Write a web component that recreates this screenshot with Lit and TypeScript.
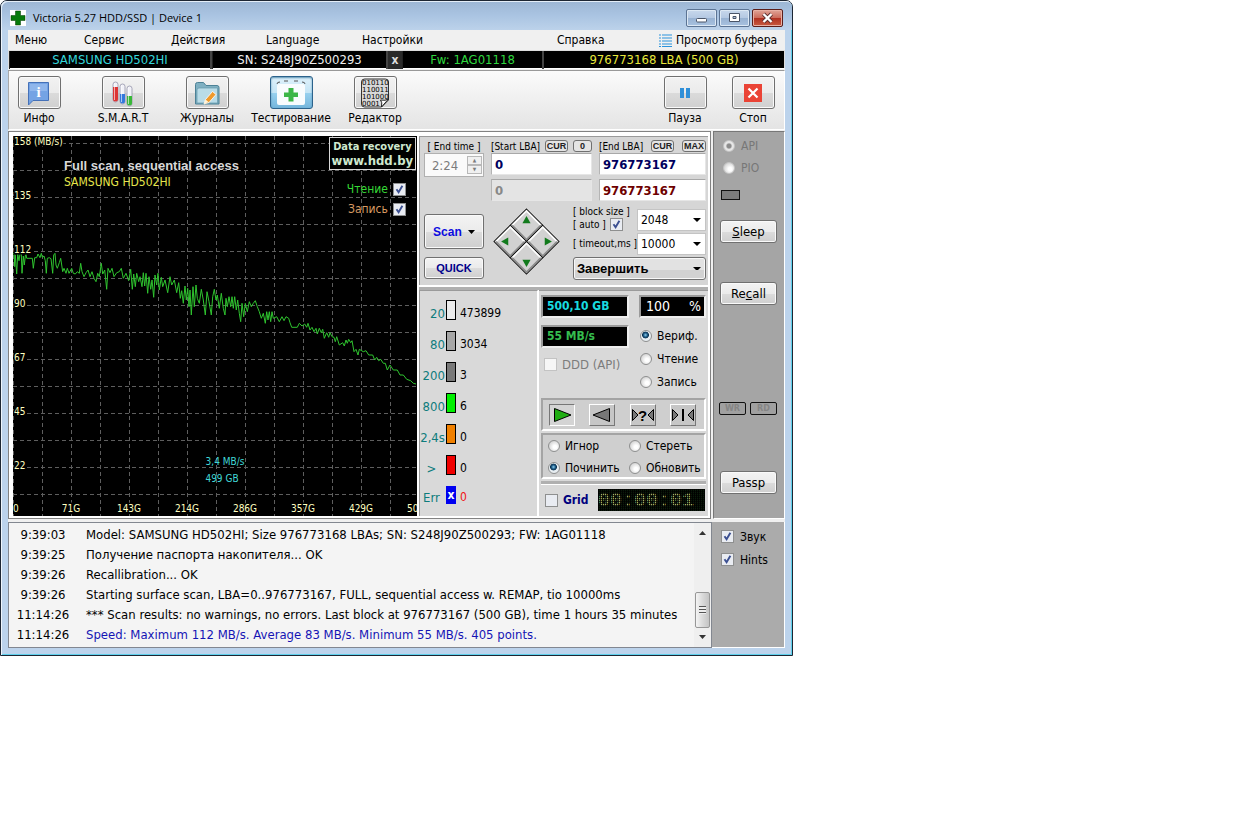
import { LitElement, html, css, svg } from "lit";
import { customElement, property } from "lit/decorators.js";
import { classMap } from "lit/directives/class-map.js";

const base = css`
  :host { display: block; box-sizing: border-box; }
  *, *::before, *::after { box-sizing: border-box; }
  button, input, select {
    font: inherit; color: inherit; margin: 0; padding: 0;
    appearance: none; border-radius: 0; outline: none;
  }
  button { cursor: default; white-space: nowrap; }
  .check {
    flex: none; width: 13px; height: 13px; border: 1px solid #8e8f8f; background: #e9ecf2;
  }
  .check:checked {
    background: #e9ecf2 url("data:image/svg+xml,%3Csvg xmlns='http://www.w3.org/2000/svg' viewBox='0 0 11 11'%3E%3Cpath d='M2.5 5.2 4.6 8.2 8.4 1.8' fill='none' stroke='%233b4f91' stroke-width='1.9'/%3E%3C/svg%3E") center / 11px 11px no-repeat;
  }
  .check:disabled { border-color: #c3c3c3; background: #f6f6f6; }
  .radio {
    flex: none; width: 12px; height: 12px; border: 1px solid #8e8f8f; border-radius: 50%;
    background: radial-gradient(circle at 60% 60%, #fff 20%, #d3d3d3 75%);
  }
  .radio:checked {
    background: radial-gradient(circle at 45% 40%, #8fd0ee 0, #1c5a86 24%, #0d3350 38%, #e8eef2 46%);
  }
  .radio:disabled { border-color: #c4c4c4; }
  .radio:disabled:checked {
    background: radial-gradient(circle, #8c8c8c 28%, #e6e6e6 46%);
  }
  .btn {
    border: 1px solid #707070; border-radius: 3px; color: #000;
    background: linear-gradient(#f3f3f3, #ebebeb 50%, #dcdcdc 51%, #cfcfcf);
    box-shadow: inset 0 0 0 1px #fafafa;
  }
`;

/* Read-speed samples: [left, top, "x,y ..."], x and y in thirds of a pixel. */
const TRACE: [number, number, string][] = [
  [-13, -6, "40,372 42,368 44,410 46,374 50,432 53,372 57,392 60,370 64,372 66,430 70,378 73,405 77,368 80,385 97,385 100,415 104,383 110,383 114,372 120,383 124,370 127,382 132,378 136,392 139,430 142,385 148,383 153,386 158,430 161,375 165,370 168,405 172,415 178,398 182,385 188,425 192,415 198,430 202,415 207,430 215,415 220,430 226,432 232,425 238,430 242,400 246,425 252,440 258,428 264,420 270,440 276,425 282,445 288,455 293,430 298,440 304,400 308,432 314,420 320,478 324,415 330,428 336,415 342,440 350,428 358,425 364,415 370,445 378,430 386,452 392,418 397,478 401,432 406,470 410,430 416,455 420,440 426,470 430,428 434,468 438,430 443,490 447,440 452,478 456,450 461,502 465,435 470,465 474,430 478,480 484,442 488,470 495,450 503,488 510,440 515,465 523,450 530,488 536,458 541,505 545,482 550,520 555,468 559,510 563,475 567,530 570,480 574,555 579,470 583,530 588,465 592,505 598,520 604,478 610,510 616,555 621,485 627,515"],
  [197, -6, "4,555 8,500 13,478 18,510 22,495 28,535 34,490 40,535 45,555 48,505 52,530 57,500 62,530 66,500 70,535 74,500 79,540 83,510 88,550 92,575 96,520 101,560 106,520 112,545 118,515 124,530 130,520 136,512 142,530 148,545 154,565 160,550 166,580 170,545 174,570 178,545 182,575 186,545 190,565 200,560 208,575 216,560 222,572 228,560 236,565 240,578"],
  [197, 184, "245,22 262,22 268,10 276,18 284,12 290,22 294,10 300,30 306,22 312,35 318,25 322,42 328,25 334,38 338,28 343,55 350,38 356,52 360,38 366,50 372,52 376,65 380,50 388,75 398,68 403,78 408,60 412,70 416,58 422,68 426,62 432,95 438,88 444,105 448,88 460,95 468,92 476,105 488,105 494,120 500,112 506,122 512,118 520,130 526,130 532,150 540,135 550,150 562,150 570,165 580,165 590,178 602,182 610,190 618,192"],
];
const tracePoints = TRACE.map(([ox, oy, s]) =>
  s.split(" ").map((p) => {
    const [x, y] = p.split(",").map(Number);
    return `${(ox + x / 3).toFixed(1)},${(oy + y / 3).toFixed(1)}`;
  }).join(" ")
).join(" ");

@customElement("speed-graph")
class SpeedGraph extends LitElement {
  static styles = [base, css`
    :host { position: relative; background: #000; overflow: hidden; height: 380px; }
    .plot { display: block; width: 100%; height: 100%; }
    .grid { stroke: #5e5e5e; stroke-dasharray: 4 3; fill: none; }
    .trace { stroke: #2fc42f; fill: none; }
    .axis { fill: #ffffc0; font-size: 10px; stroke: #000; stroke-width: 3px; paint-order: stroke; }
    .bottom { text-anchor: middle; }
    .first { text-anchor: start; }
    .cursor { fill: #40d8d8; font-size: 10px; text-anchor: middle; }
    .title { fill: #d8d8d8; font: bold 13px "Liberation Sans", sans-serif; }
    .model { fill: #e6e64c; font-size: 12px; }
    .overlay { position: absolute; top: 1px; right: 1px; display: flex; flex-direction: column; align-items: flex-end; }
    .ad {
      border: 1px solid #d8d8d8; color: #cfe8cf; font-weight: bold; font-size: 11px; line-height: 14px;
      width: 87px; height: 33px; text-align: center; margin-bottom: 9px; padding-top: 2px; white-space: nowrap;
      display: block; text-decoration: none; background: #000;
    }
    .site { font-size: 13px; }
    .toggle { display: flex; align-items: center; gap: 5px; height: 20px; margin-right: 10px; color: #36d836; font-size: 12px; }
    .write { color: #d89a62; }
  `];
  render() {
    const speeds = ["158 (MB/s)", "135", "112", "90", "67", "45", "22"];
    const sizes = ["71G", "143G", "214G", "286G", "357G", "429G", "500G"];
    return html`
      <svg class="plot" viewBox="0 0 404 380" preserveAspectRatio="xMinYMin slice" role="img" aria-label="Speed graph">
        ${Array.from({ length: 14 }, (_, i) => svg`<line class="grid" x1="0" x2="404" y1=${7.5 + i * 27} y2=${7.5 + i * 27} />`)}
        ${Array.from({ length: 14 }, (_, i) => svg`<line class="grid" y1="0" y2="380" x1=${0.5 + i * 29} x2=${0.5 + i * 29} />`)}
        <polyline class="trace" points=${tracePoints} />
        ${speeds.map((t, i) => svg`<text class="axis" x="1" y=${9 + i * 54}>${t}</text>`)}
        <text class="axis first" x="0" y="376">0</text>
        ${sizes.map((t, i) => svg`<text class="axis bottom" x=${58 + i * 58} y="376">${t}</text>`)}
        <text class="cursor" x="212" y="329">3,4 MB/s</text>
        <text class="cursor" x="209" y="346">499 GB</text>
        <text class="title" x="51" y="34">Full scan, sequential access</text>
        <text class="model" x="51" y="50">SAMSUNG HD502HI</text>
      </svg>
      <div class="overlay">
        <a class="ad" href="#">Data recovery<br /><span class="site">www.hdd.by</span></a>
        <label class="toggle">Чтение <input class="check" type="checkbox" checked /></label>
        <label class="toggle write">Запись <input class="check" type="checkbox" checked /></label>
      </div>`;
  }
}

@customElement("scan-setup")
class ScanSetup extends LitElement {
  static styles = [base, css`
    :host { background: #d6d6d6; border-top: 1px solid #9a9a9a; border-left: 1px solid #9a9a9a; padding: 2px 2px 5px 4px; }
    .lba { display: grid; grid-template-columns: 60px 101px 1fr; column-gap: 7px; }
    .cap { display: flex; align-items: center; justify-content: space-between; height: 14px; font-size: 10px; white-space: nowrap; }
    .mid { justify-content: center; }
    .mini { height: 12px; padding: 0 1px; border: 1px solid #707070; border-radius: 3px; background: #e4e4e4; font: bold 9px/9px "Liberation Sans", sans-serif; color: #222; }
    .zero { width: 19px; }
    .field { width: 100%; height: 22px; background: #fff; border: 1px solid #b4b4b4; border-color: #a8a8a8 #e6e6e6 #e6e6e6 #b4b4b4; padding: 0 3px; font-weight: bold; font-size: 13px; color: #00005e; }
    .time { display: flex; align-items: center; height: 24px; padding: 0 1px 0 7px; background: #fafafa; border: 1px solid #b0b0b0; color: #7c7c7c; font-size: 13px; }
    .timebox { width: 32px; border: 0; background: none; }
    .spin { display: flex; flex-direction: column; margin-left: auto; }
    .step { width: 15px; height: 9px; border: 1px solid #b8b8b8; background: #f0f0f0; font-size: 5px; line-height: 5px; }
    .second { margin-top: 2px; }
    .gray { background: #e4e4e4; color: #888; }
    .red { color: #6e0000; }
    .lower { display: grid; grid-template-columns: 60px 67px 1fr; column-gap: 9px; margin-top: 4px; }
    .run { display: flex; flex-direction: column; gap: 8px; padding-top: 9px; }
    .scan { display: flex; align-items: center; justify-content: center; gap: 6px; height: 35px; font: bold 12px "Liberation Sans", sans-serif; color: #0c0ce0; }
    .quick { height: 22px; font: bold 11px "Liberation Sans", sans-serif; color: #00008b; }
    .tri { width: 7px; height: 4px; fill: #000; }
    .pad { width: 67px; height: 67px; margin-top: 3px; }
    .opts { display: flex; flex-direction: column; margin-left: 4px; }
    .opt { display: grid; grid-template-columns: 1fr 69px; align-items: center; height: 23px; }
    .first { height: 27px; align-items: end; padding-bottom: 1px; }
    .names { font-size: 10px; line-height: 12px; white-space: nowrap; }
    .auto { display: flex; align-items: center; gap: 4px; height: 13px; }
    .sel {
      width: 100%; height: 22px; padding-left: 3px; font-size: 12px; border: 1px solid #c4c4c4;
      background: #fff url("data:image/svg+xml,%3Csvg xmlns='http://www.w3.org/2000/svg' viewBox='0 0 8 4'%3E%3Cpath d='M0 0h8L4 4z'/%3E%3C/svg%3E") right 4px center / 8px 4px no-repeat;
    }
    .finish { height: 23px; margin-top: 2px; font: bold 13px "Liberation Sans", sans-serif; border: 1px solid #707070; border-radius: 3px;
      background-color: #e2e2e2; box-shadow: inset 0 0 0 1px #f8f8f8, inset 0 -9px #d2d2d2; }
  `];
  render() {
    const pads = [["33 17", "M33 8l4 7h-8z"], ["17 33", "M8 33l7-4v8z"], ["49 33", "M58 33l-7-4v8z"], ["33 49", "M33 58l4-7h-8z"]];
    return html`
      <div class="lba">
        <label class="cap mid" for="time">[ End time ]</label>
        <div class="cap"><label for="start">[Start LBA]</label><button class="mini">CUR</button><button class="mini zero">0</button></div>
        <div class="cap"><label for="end">[End LBA]</label><button class="mini">CUR</button><button class="mini">MAX</button></div>
        <div class="time"><input class="timebox" id="time" value="2:24" disabled />
          <span class="spin"><button class="step" aria-label="Up">▲</button><button class="step" aria-label="Down">▼</button></span></div>
        <input class="field" id="start" value="0" />
        <input class="field" id="end" value="976773167" />
        <span></span>
        <input class="field gray second" aria-label="Current start" value="0" disabled />
        <input class="field red second" aria-label="Current end" value="976773167" />
      </div>
      <div class="lower">
        <div class="run">
          <button class="btn scan">Scan <svg class="tri" viewBox="0 0 7 4"><path d="M0 0h7L3.5 4z" /></svg></button>
          <button class="btn quick">QUICK</button>
        </div>
        <svg class="pad" viewBox="0 0 66 66" role="img" aria-label="Navigation">
          ${pads.map(([c, arrow]) => {
            const [x, y] = c.split(" ").map(Number);
            return svg`<path d="M${x} ${y - 16}l16 16-16 16-16-16z" fill="#d2d2d2" stroke="#111" />
              <path d="M${x - 14} ${y}l14-14 14 14" fill="none" stroke="#fff" stroke-width="1.5" />
              <path d="M${x - 14} ${y}l14 14 14-14" fill="none" stroke="#8a8a8a" stroke-width="1.5" />
              <path d=${arrow} fill="#117a1c" />`;
          })}
        </svg>
        <div class="opts">
          <div class="opt first">
            <div class="names"><label for="block">[ block size ]</label>
              <label class="auto">[ auto ] <input class="check" type="checkbox" checked /></label></div>
            <select class="sel" id="block"><option>2048</option></select>
          </div>
          <div class="opt">
            <label class="names" for="timeout">[ timeout,ms ]</label>
            <select class="sel" id="timeout"><option>10000</option></select>
          </div>
          <select class="sel finish" aria-label="At the end"><option>Завершить</option></select>
        </div>
      </div>`;
  }
}

@customElement("block-stats")
class BlockStats extends LitElement {
  static styles = [base, css`
    :host { background: #d9d9d9; border-top: 1px solid #9a9a9a; border-left: 1px solid #9a9a9a; border-right: 1px solid #fff; padding-top: 9px; }
    .row { display: grid; grid-template-columns: 23px 10px 1fr; column-gap: 3px; height: 31px; font-size: 13px; line-height: 27px; }
    .row:last-child { height: 25px; line-height: 23px; }
    .name { color: #0d7c7c; white-space: nowrap; justify-self: end; margin-right: -2px; }
    .bar { height: 20px; width: 10px; border: 1px solid #000; font-weight: bold; color: #fff; line-height: 16px; font-size: 12px; text-align: center; }
    .num { font-size: 12px; padding-left: 1px; }
    .white { background: #ececec; } .light { background: #a6a6a6; } .dark { background: #787878; }
    .green { background: #00f000; } .orange { background: #f08000; } .red { background: #f00000; }
    .blue { background: #0000f0; border-color: #0000f0; height: 18px; }
    .err { color: #f01414; }
    .lean { justify-self: center; margin: 0; }
  `];
  render() {
    const rows = [["20", "white", "473899"], ["80", "light", "3034"], ["200", "dark", "3"], ["800", "green", "6"], ["2,4s", "orange", "0"], [">", "red", "0"], ["Err", "blue", "0"]];
    return rows.map(([n, c, v]) => html`
      <div class="row"><span class=${classMap({ name: true, lean: n === ">" || n === "Err" })}>${n}</span>
        <span class="bar ${c}">${c === "blue" ? "x" : ""}</span>
        <span class=${classMap({ num: true, err: c === "blue" })}>${v}</span></div>`);
  }
}

@customElement("scan-control")
class ScanControl extends LitElement {
  static styles = [base, css`
    :host { background: #d9d9d9; border-top: 1px solid #9a9a9a; padding: 4px 2px 1px; }
    .top { display: grid; grid-template-columns: 88px 67px; justify-content: space-between; row-gap: 7px; }
    .col { display: flex; flex-direction: column; gap: 7px; }
    .modes { padding: 3px 0 0 1px; }
    .led { height: 23px; background: #000; border: 2px solid #b6b6b6; border-color: #9a9a9a #eee #eee #9a9a9a; font-weight: bold; font-size: 12px; line-height: 19px; padding: 0 4px; color: #18dce0; white-space: nowrap; }
    .rate { color: #35bd4e; }
    .pct { display: flex; justify-content: space-between; color: #fff; font-size: 14px; font-weight: normal; padding: 0 3px 0 5px; }
    .opt { display: flex; align-items: center; gap: 5px; height: 16px; font-size: 12px; white-space: nowrap; }
    .dim { color: #7c7c7c; font-size: 13px; margin: 1px 0 0 3px; }
    .box { border: 2px solid #fff; border-color: #a4a4a4 #fff #fff #a4a4a4; background: #cfcfcf; }
    .play { display: flex; justify-content: space-between; align-items: center; height: 33px; padding: 0 8px 0 6px; margin-top: 8px; }
    .key { width: 26px; height: 22px; border: 1px solid #fff; border-color: #fff #777 #777 #fff; background: #c6c6c6; }
    .on { border-color: #777 #fff #fff #777; background: #d4d4d4; }
    .ico { display: block; width: 24px; height: 20px; fill: #777; stroke: #000; }
    .go { fill: #1fae12; }
    .q { fill: #000; stroke: none; font: bold 15px "Liberation Sans", sans-serif; }
    .acts { display: grid; grid-template-columns: 81px 1fr; gap: 6px 0; padding: 3px 0 1px 5px; margin-top: 2px; }
    .ridge { height: 4px; background: #b0b0b0; border-bottom: 1px solid #fff; margin-top: 2px; }
    .foot { display: flex; align-items: center; gap: 5px; margin-top: 4px; padding: 0 1px 0 4px; }
    .gridlab { display: flex; align-items: center; gap: 5px; color: #00007e; font-weight: bold; font-size: 12px; }
    .lcd { position: relative; margin-left: auto; width: 107px; height: 22px; background: #061406; color: #eaf58a; font: bold 20px/24px "Liberation Mono", monospace; overflow: hidden; }
    .lcd::after { content: ""; position: absolute; inset: 0; background:
      repeating-linear-gradient(90deg, #000000d0 0 1px, #12281230 1px 2px), repeating-linear-gradient(#000000c0 0 1px, #12281230 1px 2px); }
  `];
  radio(group: string, text: string, on = false) {
    return html`<label class="opt"><input class="radio" type="radio" name=${group} ?checked=${on} />${text}</label>`;
  }
  render() {
    return html`
      <div class="top">
        <div class="led">500,10 GB</div>
        <div class="led pct"><span>100</span><span>%</span></div>
        <div class="col">
          <div class="led rate">55 MB/s</div>
          <label class="opt dim"><input class="check" type="checkbox" disabled />DDD (API)</label>
        </div>
        <div class="col modes">
          ${this.radio("mode", "Вериф.", true)}${this.radio("mode", "Чтение")}${this.radio("mode", "Запись")}
        </div>
      </div>
      <div class="box play">
        <button class="key on" aria-label="Forward"><svg class="ico go" viewBox="0 0 24 20"><path d="M4.500 3.500L21 10 4.500 16.500z" /></svg></button>
        <button class="key" aria-label="Backward"><svg class="ico" viewBox="0 0 24 20"><path d="M19.500 3.500L3 10l16.500 6.500z" /></svg></button>
        <button class="key" aria-label="Random"><svg class="ico" viewBox="0 0 24 20"><path d="M1.500 4.500L7 10l-5.500 5.500zM22.500 4.500L17 10l5.500 5.500z" /><text class="q" x="7" y="15.500">?</text></svg></button>
        <button class="key" aria-label="Butterfly"><svg class="ico" viewBox="0 0 24 20"><path d="M1.500 4.500L7 10l-5.500 5.500zM22.500 4.500L17 10l5.500 5.500z" /><path d="M12 4v12" stroke-width="2" /></svg></button>
      </div>
      <div class="box acts">
        ${this.radio("act", "Игнор")}${this.radio("act", "Стереть")}${this.radio("act", "Починить", true)}${this.radio("act", "Обновить")}
      </div>
      <div class="ridge"></div>
      <div class="foot">
        <label class="gridlab"><input class="check" type="checkbox" />Grid</label>
        <div class="lcd">00:00:01</div>
      </div>`;
  }
}

@customElement("tool-button")
class ToolButton extends LitElement {
  @property() label = "";
  @property({ type: Boolean }) active = false;
  static styles = [base, css`
    :host { width: 44px; }
    .tool { display: flex; flex-direction: column; align-items: center; width: 44px; border: 0; background: none; }
    .face { display: flex; flex: none; align-items: center; justify-content: center; width: 43px; height: 33px; border: 1px solid #707070; border-radius: 3px;
      background: linear-gradient(#f2f2f2, #ebebeb 50%, #dbdbdb 51%, #d0d0d0); box-shadow: inset 0 0 0 1px #fafafa; }
    .active { border-color: #2c628b; background: linear-gradient(#e0f2fb, #c4e5f6 50%, #98d1ef 51%, #74b6dc); box-shadow: inset 0 1px 2px #5a92b2; }
    .text { font-size: 12px; line-height: 18px; white-space: nowrap; }
  `];
  render() {
    return html`<button class="tool"><span class=${classMap({ face: true, active: this.active })}><slot></slot></span>
      <span class="text">${this.label}</span></button>`;
  }
}

@customElement("event-log")
class EventLog extends LitElement {
  static styles = [base, css`
    :host { display: flex; background: #f4f4f4; border: 1px solid #828790; }
    .lines { flex: 1; min-width: 0; padding: 2px 0; }
    .line { display: grid; grid-template-columns: 68px 1fr; column-gap: 9px; line-height: 20px; font-size: 13px; white-space: nowrap; }
    .when { text-align: center; }
    .hot { color: #1414b4; }
    .scroll { width: 17px; display: flex; flex-direction: column; align-items: center; justify-content: space-between; background: #efefef; padding: 8px 0; }
    .arrow { width: 7px; height: 4px; fill: #333; }
    .thumb { width: 15px; height: 36px; margin: auto 0 7px; border: 1px solid #979797; border-radius: 2px; background: linear-gradient(90deg, #f4f4f4, #dadada 50%, #c4c4c4); display: grid; place-items: center; }
    .grip { width: 7px; height: 8px; background: repeating-linear-gradient(#555 0 1px, #eee 1px 3px); }
  `];
  render() {
    const lines = [
      ["9:39:03", "Model: SAMSUNG HD502HI; Size 976773168 LBAs; SN: S248J90Z500293; FW: 1AG01118"],
      ["9:39:25", "Получение паспорта накопителя... OK"],
      ["9:39:26", "Recallibration... OK"],
      ["9:39:26", "Starting surface scan, LBA=0..976773167, FULL, sequential access w. REMAP, tio 10000ms"],
      ["11:14:26", "*** Scan results: no warnings, no errors. Last block at 976773167 (500 GB), time 1 hours 35 minutes"],
      ["11:14:26", "Speed: Maximum 112 MB/s. Average 83 MB/s. Minimum 55 MB/s. 405 points."],
    ];
    return html`
      <div class="lines" role="log">${lines.map(([t, m], i) => html`<div class="line"><span class="when">${t}</span><span class=${classMap({ hot: i === 5 })}>${m}</span></div>`)}</div>
      <div class="scroll">
        <svg class="arrow" viewBox="0 0 7 4"><path d="M0 4h7L3.500 0z" /></svg>
        <span class="thumb"><span class="grip"></span></span>
        <svg class="arrow" viewBox="0 0 7 4"><path d="M0 0h7L3.500 4z" /></svg>
      </div>`;
  }
}

@customElement("app-root")
class AppRoot extends LitElement {
  static styles = [base, css`
    :host { min-height: 100vh; background: #fff; color: #000; font-family: "DejaVu Sans Condensed", "Noto Sans", sans-serif; font-size: 12px; }
    .window { max-width: 793px; border: 1px solid #1d2633; border-radius: 7px 7px 0 0; background: #bcd3ec; padding: 0 7px 7px; box-shadow: inset 1px 1px #eef5fc, inset -1px -1px #5ed0ec; }
    .titlebar { display: flex; align-items: center; height: 29px; margin: 0 -7px; padding: 4px 9px 0; border-radius: 6px 6px 0 0;
      background: linear-gradient(#9cb6d4, #aac4e2 50%, #bcd2ea); box-shadow: inset 1px 1px #e4eef8; }
    .logo { width: 16px; height: 16px; background: #fff; }
    .name { margin-left: 7px; font: 11px "Open Sans", sans-serif; flex: 1; }
    .winbtns { display: flex; gap: 2px; }
    .win { width: 31px; height: 18px; border: 1px solid #5c7494; border-radius: 2px; background: linear-gradient(#c8d8ec, #b4c8e2 50%, #98b2d2 51%, #a8c2e0); box-shadow: inset 0 0 0 1px #dce8f4; display: grid; place-items: center; }
    .close { border-color: #5b1e1a; background: linear-gradient(#e0a598, #cc6a5a 50%, #b03020 51%, #c85a40); box-shadow: inset 0 0 0 1px #e8b0a4; }
    .winico { display: block; width: 13px; height: 12px; }
    .client { background: #f0f0f0; }
    .menu { display: grid; grid-template-columns: 69px 87px 95px 96px 195px 102px 1fr; align-items: center; height: 20px; padding-left: 7px; }
    .item { border: 0; background: none; text-align: left; padding-bottom: 1px; }
    .buffer { display: flex; align-items: center; gap: 4px; padding-top: 1px; justify-self: start; }
    .list { width: 13px; height: 13px; }
    .info { display: grid; grid-template-columns: 203px 176px 14px 142px 1fr; height: 19px; background: #000; border: 1px solid #ddd; border-bottom-color: #fff; font-size: 13px; line-height: 18px; text-align: center; color: #f0f0f0; white-space: nowrap; }
    .cell { border-right: 2px solid #444; border-left: 1px solid #222; }
    .model { color: #35d6dc; } .x { background: #2a2a2a; font-weight: bold; font-size: 12px; border: 0; color: #ddd; } .fw { color: #2fd83f; } .lba { color: #e8e83c; border: 0; }
    .toolbar { display: flex; gap: 40px; height: 60px; margin-top: 1px; padding: 5px 9px 0 8px; border: 1px solid #fff; border-top-color: #999; border-left-color: #aaa; background: linear-gradient(#fbfbfb, #e4e4e4); }
    .pause { margin-left: auto; } .stop { margin-left: -16px; }
    .ic { display: block; width: 30px; height: 30px; }
    .bits { font: 7px "DejaVu Sans", sans-serif; }
    .main { display: flex; gap: 2px; margin-top: 1px; }
    .work { flex: 1; min-width: 0; display: flex; gap: 2px; padding: 4px 2px 2px 4px; background: #fff; border: 1px solid #828282; }
    .graph { flex: 1; min-width: 0; }
    .right { flex: 0 0 289px; display: grid; grid-template-rows: auto 1fr; gap: 5px; background: linear-gradient(#b0b0b0, #b0b0b0) 0 151px / 100% 3px no-repeat; }
    .under { display: grid; grid-template-columns: 119px 1fr; gap: 1px; }
    .side { flex: 0 0 72px; background: #a5a5a5; border: 1px solid #fff; border-top-color: #777; border-left-color: #777; padding: 3px 6px; display: flex; flex-direction: column; }
    .opt { display: flex; align-items: center; gap: 6px; height: 23px; }
    .dim { color: #777; height: 22px; margin-left: 3px; }
    .lamp { width: 19px; height: 10px; border: 1px solid #111; background: #7c7c7c; margin: 11px 0 20px 1px; }
    .btn { width: 57px; height: 23px; font-size: 13px; }
    .recall { margin-top: 39px; }
    .leds { display: flex; gap: 4px; margin: 97px 0 0 -1px; }
    .led { width: 27px; height: 13px; border: 1px solid #111; border-radius: 2px; font-size: 9px; line-height: 11px; text-align: center; font-weight: bold; color: #858585; background: #a0a0a0; }
    .passp { margin-top: 56px; }
    .bottom { display: flex; margin-top: 3px; }
    .log { flex: 1; min-width: 0; }
    .flags { flex: 0 0 73px; background: #ababab; border-right: 1px solid #fff; border-bottom: 1px solid #fff; padding: 3px 9px; }
  `];
  render() {
    return html`
      <main class="window">
        <header class="titlebar">
          <svg class="logo" viewBox="0 0 16 16"><path d="M5.500 1h5v4.500H15v5h-4.500V15h-5v-4.500H1v-5h4.500z" fill="#067a0a" stroke="#003c00" stroke-width=".5" /></svg>
          <span class="name">Victoria 5.27 HDD/SSD | Device 1</span>
          <span class="winbtns">
            <button class="win" aria-label="Minimize"><svg class="winico" viewBox="0 0 13 12"><rect x="1.500" y="6.500" width="10" height="3.500" rx="1" fill="#fff" stroke="#4a5568" /></svg></button>
            <button class="win" aria-label="Maximize"><svg class="winico" viewBox="0 0 13 12"><path d="M1.500 1.500h10v8h-10zM5 4.500h3v2H5z" fill="#fff" stroke="#4a5568" fill-rule="evenodd" /></svg></button>
            <button class="win close" aria-label="Close"><svg class="winico" viewBox="0 0 13 12"><path d="M2.500 2l8 8M10.500 2l-8 8" stroke="#5a3030" stroke-width="4" /><path d="M2.500 2l8 8M10.500 2l-8 8" stroke="#fff" stroke-width="2.400" /></svg></button>
          </span>
        </header>
        <div class="client">
          <nav class="menu">
            ${["Меню", "Сервис", "Действия", "Language", "Настройки", "Справка"].map((t) => html`<button class="item">${t}</button>`)}
            <button class="item buffer"><svg class="list" viewBox="0 0 13 13">${[1, 4, 7, 10, 12.5].map((y) => svg`<path d="M0 ${y}h2M3 ${y}h10" stroke="#2a93dc" />`)}</svg>Просмотр буфера</button>
          </nav>
          <div class="info">
            <span class="cell model">SAMSUNG HD502HI</span><span class="cell">SN: S248J90Z500293</span>
            <button class="cell x">x</button><span class="cell fw">Fw: 1AG01118</span><span class="cell lba">976773168 LBA (500 GB)</span>
          </div>
          <div class="toolbar">
            <tool-button label="Инфо"><svg class="ic" viewBox="0 0 30 30"><path d="M4.500 4.500h20v18H9l-4.500 4.500z" fill="#74a3e4" stroke="#4571b8" /><path d="M6 6h17v7H6z" fill="#8fb6ec" /><text x="14.500" y="19" text-anchor="middle" font-family="Liberation Serif, serif" font-weight="bold" font-size="15" fill="#fff">i</text></svg></tool-button>
            <tool-button label="S.M.A.R.T"><svg class="ic" viewBox="0 0 30 30">
              ${[[5, 4, "#dc3434", 9], [12, 6, "#3478dc", 16], [19, 8, "#38b838", 18]].map(([x, y, c, l]) => svg`<rect x=${x} y=${y} width="5" height="20" rx="2.500" fill="#f2f2f8" stroke="#8888a0" stroke-width=".7" /><path d="M${x} ${l}h5v${Number(y) + 17 - Number(l)}a2.500 2.500 0 0 1-5 0z" fill=${c} /><path d="M${Number(x) + 1.5} ${Number(y) + 1}v17" stroke="#fff" opacity=".6" />`)}</svg></tool-button>
            <tool-button label="Журналы"><svg class="ic" viewBox="0 0 30 30"><path d="M3.500 6.500q0-2 2-2h6l2.500 3h11q2 0 2 2V26h-23.500z" fill="#7fb0c2" stroke="#4c8196" /><path d="M5 12q0-2 2-2h18.500v15H5z" fill="#b9dce8" stroke="#6698aa" stroke-width=".7" /><path d="M12 26l1.500-4.500 7-8 3.500 3-7 8z" fill="#ef9a2d" stroke="#fff" stroke-width=".8" /><path d="M12 26l1.500-4.500 3 2.500z" fill="#fff4d8" /></svg></tool-button>
            <tool-button label="Тестирование" active><svg class="ic" viewBox="0 0 30 30"><rect x="1" y="6" width="28" height="21" rx="2" fill="#f8fcfe" /><path d="M1 6q0-2 3-2M8 3h4M18 3h4M29 6q0-2-3-2" fill="none" stroke="#555" /><path d="M12.500 10h5v4.500H22v4.500h-4.500v4.500h-5V19H8v-4.500h4.500z" fill="#3cb648" /></svg></tool-button>
            <tool-button label="Редактор"><svg class="ic" viewBox="0 0 30 30"><path d="M1.500 4q0-3 3-3h21q3 0 3 3v18l-7 7h-17q-3 0-3-3z" fill="#d8d8d8" stroke="#333" />
              ${["010110", "110011", "101000", "0001"].map((t, i) => svg`<text class="bits" x="2" y=${7 + i * 7}>${t}</text>`)}<path d="M21.500 29q1-5-1-7 5 1 8-1z" fill="#fff" stroke="#222" /></svg></tool-button>
            <tool-button class="pause" label="Пауза"><svg class="ic" viewBox="0 0 30 30"><path d="M10 10h4v10h-4zM16 10h4v10h-4z" fill="#2f8fd8" /></svg></tool-button>
            <tool-button class="stop" label="Стоп"><svg class="ic" viewBox="0 0 30 30"><rect x="6" y="6" width="18" height="18" fill="#ea4335" /><path d="M10.500 10.500l9 9M19.500 10.500l-9 9" stroke="#fff" stroke-width="2.200" /></svg></tool-button>
          </div>
          <div class="main">
            <div class="work">
              <speed-graph class="graph"></speed-graph>
              <div class="right">
                <scan-setup></scan-setup>
                <div class="under"><block-stats></block-stats><scan-control></scan-control></div>
              </div>
            </div>
            <aside class="side">
              <label class="opt dim"><input class="radio" type="radio" name="io" checked disabled />API</label>
              <label class="opt dim"><input class="radio" type="radio" name="io" disabled />PIO</label>
              <div class="lamp"></div>
              <button class="btn"><u>S</u>leep</button>
              <button class="btn recall">Re<u>c</u>all</button>
              <div class="leds"><span class="led">WR</span><span class="led">RD</span></div>
              <button class="btn passp">Passp</button>
            </aside>
          </div>
          <div class="bottom">
            <event-log class="log"></event-log>
            <div class="flags">
              <label class="opt"><input class="check" type="checkbox" checked />Звук</label>
              <label class="opt"><input class="check" type="checkbox" checked />Hints</label>
            </div>
          </div>
        </div>
      </main>`;
  }
}
